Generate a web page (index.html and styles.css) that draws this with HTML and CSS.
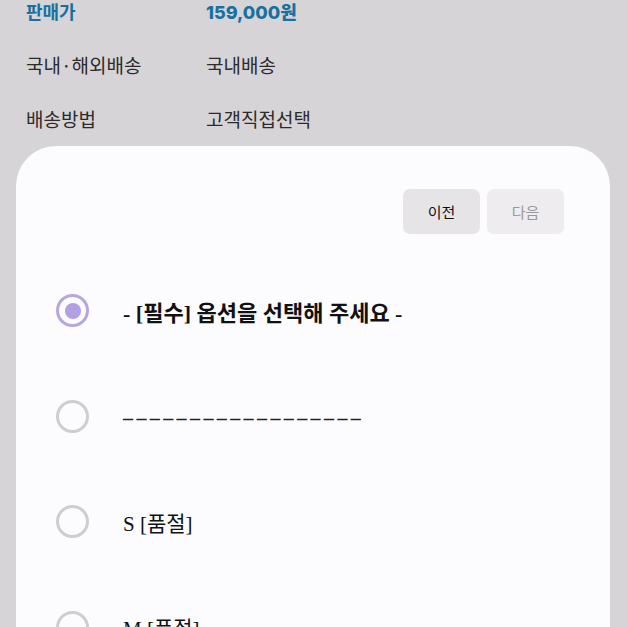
FILE: index.html
```html
<html>
  <head>
    <meta charset="utf-8">
    <link rel="stylesheet" href="styles.css">
    <title>옵션 선택</title>
  </head>
  <body>
    <div class="info">
      <div class="row price">
        <span class="label">판매가</span>
        <span class="value">159,000원</span>
      </div>
      <div class="row">
        <span class="label">국내·해외배송</span>
        <span class="value">국내배송</span>
      </div>
      <div class="row">
        <span class="label">배송방법</span>
        <span class="value">고객직접선택</span>
      </div>
    </div>

    <div class="sheet">
      <div class="nav">
        <button class="btn">이전</button>
        <button class="btn off">다음</button>
      </div>
      <ul class="options">
        <li class="checked"><span class="radio"></span><span class="text">- [필수] 옵션을 선택해 주세요 -</span></li>
        <li><span class="radio"></span><span class="text dashes">––––––––––––––––––</span></li>
        <li><span class="radio"></span><span class="text">S [품절]</span></li>
        <li><span class="radio"></span><span class="text">M [품절]</span></li>
      </ul>
    </div>
  </body>
</html>
```
FILE: styles.css
```css
body {
  margin: 0;
  background: #d7d4d7;
  font-family: "Noto Sans CJK KR", "Noto Sans", sans-serif;
  overflow: hidden;
  height: 627px;
}

.info {
  padding: 0 0 0 26px;
}
.row {
  display: flex;
  height: 54px;
  align-items: center;
  font-size: 19px;
  color: #2b2b2b;
}
.row:first-child {
  margin-top: -15px;
  height: 52px;
}
.row .label {
  width: 180px;
}
.price {
  font-weight: bold;
  color: #17719f;
  font-size: 18px;
}
.price .value {
  font-family: "Inter", "Noto Sans CJK KR", sans-serif;
  font-weight: 800;
}

.sheet {
  margin: 1px 17px 0 16px;
  background: #fcfbfd;
  border-radius: 40px 40px 0 0;
  height: 600px;
}

.nav {
  display: flex;
  justify-content: flex-end;
  gap: 7px;
  padding: 43px 46px 0 0;
}
.btn {
  width: 77px;
  height: 45px;
  border: none;
  border-radius: 7px;
  background: #e6e4e7;
  color: #111;
  font-family: "Noto Sans CJK KR", sans-serif;
  font-size: 15px;
}
.btn.off {
  background: #efecef;
  color: #999;
}

.options {
  list-style: none;
  margin: 0;
  padding: 24px 0 0 40px;
}
.options li {
  display: flex;
  align-items: center;
  height: 105.5px;
}
.radio {
  width: 27px;
  height: 27px;
  border: 3px solid #cfcdcf;
  border-radius: 50%;
  box-sizing: content-box;
  display: flex;
  align-items: center;
  justify-content: center;
  margin-right: 34px;
}
.checked .radio {
  border-color: #b7a7df;
}
.checked .radio::after {
  content: "";
  width: 16px;
  height: 16px;
  border-radius: 50%;
  background: #b2a0e2;
}
.text {
  font-family: "Liberation Serif", "Noto Sans CJK KR", serif;
  font-size: 21px;
  color: #111;
}
.checked .text {
  font-size: 22px;
  font-weight: bold;
}
.text.dashes {
  font-size: 20px;
  letter-spacing: 3.4px;
  font-weight: bold;
  color: #222;
  padding-top: 5px;
}
```
